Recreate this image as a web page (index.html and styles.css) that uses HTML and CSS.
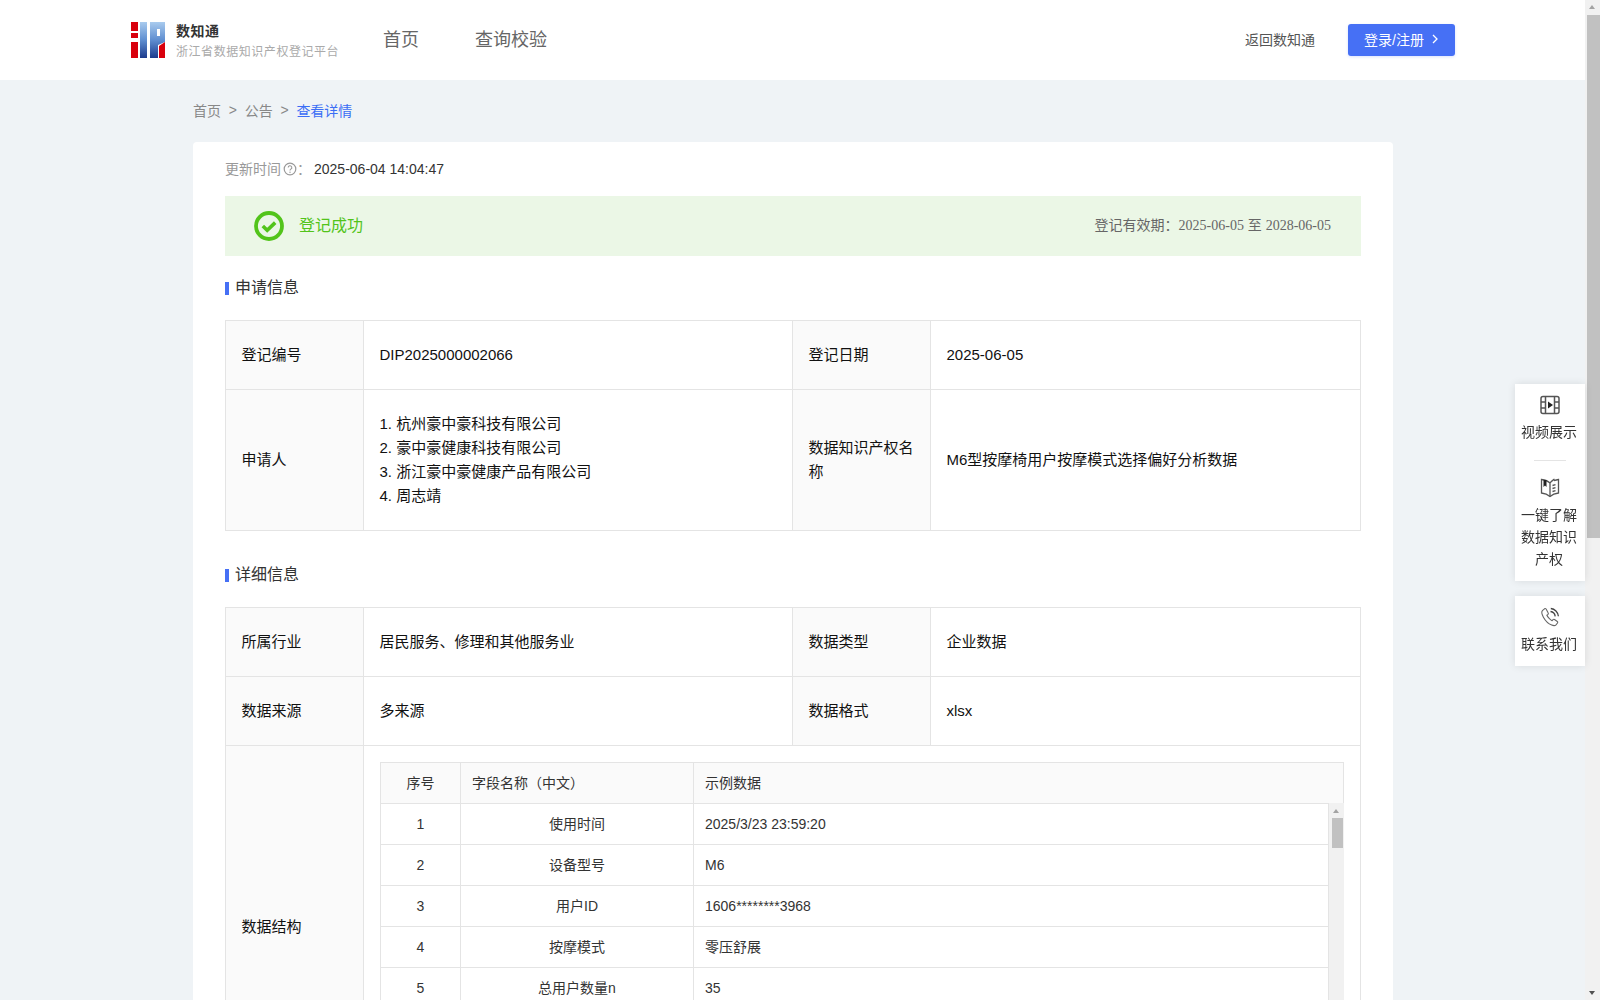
FILE: index.html
```html
<!DOCTYPE html>
<html lang="zh-CN">
<head>
    <meta charset="UTF-8">
    <title>数知通 - 查看详情</title>
    <link rel="stylesheet" href="styles.css">
</head>
<body>
    <div class="page">
        <div class="main">
            <header class="header">
                <div class="brand">
                    <svg class="logo" viewBox="0 0 34 36" width="34" height="36">
                        <defs>
                            <linearGradient id="logoBlue" x1="0" y1="0" x2="0" y2="1">
                                <stop offset="0" stop-color="#a9cbee"/>
                                <stop offset="0.5" stop-color="#5f8ed0"/>
                                <stop offset="1" stop-color="#1d3b8c"/>
                            </linearGradient>
                        </defs>
                        <path fill="#d9000d" d="M0 0h7v9H0zM0 11h7v5H0zM0 20h7v16H0z"/>
                        <path fill="url(#logoBlue)" d="M9 0h7v36H9zM19 0h15v20l-7 3v13h-8zM26 7v7h3V7z" fill-rule="evenodd"/>
                        <path fill="#d9000d" d="M28 24l6-4v16h-6z"/>
                    </svg>
                    <div class="brand-text">
                        <div class="brand-name">数知通</div>
                        <div class="brand-sub">浙江省数据知识产权登记平台</div>
                    </div>
                </div>
                <nav class="nav">
                    <a>首页</a>
                    <a>查询校验</a>
                </nav>
                <a class="back-link">返回数知通</a>
                <a class="login-btn">登录/注册
                    <svg viewBox="0 0 6 10" width="6" height="10"><path d="M1 1l4 4-4 4" fill="none" stroke="#fff" stroke-width="1.3"/></svg>
                </a>
            </header>

            <div class="breadcrumb">
                <span>首页</span><i>&gt;</i><span>公告</span><i>&gt;</i><span class="current">查看详情</span>
            </div>

            <div class="card">
                <div class="update-time">
                    <span class="update-label">更新时间</span>
                    <svg class="help-icon" viewBox="0 0 14 14" width="14" height="14">
                        <circle cx="7" cy="7" r="5.8" fill="none" stroke="#999" stroke-width="1.2"/>
                        <path d="M5.2 5.6a1.8 1.8 0 1 1 2.7 1.5c-.6.4-.9.7-.9 1.3" fill="none" stroke="#999" stroke-width="1.1"/>
                        <circle cx="7" cy="10.2" r=".7" fill="#999"/>
                    </svg>
                    <span class="update-label">：</span>
                    <span class="update-value">2025-06-04 14:04:47</span>
                </div>

                <div class="status-bar">
                    <svg viewBox="0 0 30 30" width="30" height="30">
                        <circle cx="15" cy="15" r="13" fill="none" stroke="#52c41a" stroke-width="3.8"/>
                        <path d="M8.800 15l4.400 4.200 8-7.600" fill="none" stroke="#52c41a" stroke-width="3.6"/>
                    </svg>
                    <span class="status-text">登记成功</span>
                    <span class="status-date">登记有效期：<em>2025-06-05</em> 至 <em>2028-06-05</em></span>
                </div>

                <h3 class="section-title">申请信息</h3>
                <table class="info-table">
                    <colgroup><col class="col-label"><col class="col-value"><col class="col-label"><col></colgroup>
                    <tr>
                        <th>登记编号</th>
                        <td>DIP2025000002066</td>
                        <th>登记日期</th>
                        <td>2025-06-05</td>
                    </tr>
                    <tr>
                        <th>申请人</th>
                        <td>
                            <div>1. 杭州豪中豪科技有限公司</div>
                            <div>2. 豪中豪健康科技有限公司</div>
                            <div>3. 浙江豪中豪健康产品有限公司</div>
                            <div>4. 周志靖</div>
                        </td>
                        <th>数据知识产权名称</th>
                        <td>M6型按摩椅用户按摩模式选择偏好分析数据</td>
                    </tr>
                </table>

                <h3 class="section-title section-second">详细信息</h3>
                <table class="info-table">
                    <colgroup><col class="col-label"><col class="col-value"><col class="col-label"><col></colgroup>
                    <tr>
                        <th>所属行业</th>
                        <td>居民服务、修理和其他服务业</td>
                        <th>数据类型</th>
                        <td>企业数据</td>
                    </tr>
                    <tr>
                        <th>数据来源</th>
                        <td>多来源</td>
                        <th>数据格式</th>
                        <td>xlsx</td>
                    </tr>
                    <tr>
                        <th>数据结构</th>
                        <td colspan="3" class="structure-cell">
                            <table class="field-table field-head">
                                <colgroup><col class="col-no"><col class="col-name"><col></colgroup>
                                <tr>
                                    <th class="center">序号</th>
                                    <th>字段名称（中文）</th>
                                    <th>示例数据</th>
                                </tr>
                            </table>
                            <div class="field-body">
                                <table class="field-table">
                                    <colgroup><col class="col-no"><col class="col-name"><col></colgroup>
                                    <tr><td class="center">1</td><td class="center">使用时间</td><td>2025/3/23 23:59:20</td></tr>
                                    <tr><td class="center">2</td><td class="center">设备型号</td><td>M6</td></tr>
                                    <tr><td class="center">3</td><td class="center">用户ID</td><td>1606********3968</td></tr>
                                    <tr><td class="center">4</td><td class="center">按摩模式</td><td>零压舒展</td></tr>
                                    <tr><td class="center">5</td><td class="center">总用户数量n</td><td>35</td></tr>
                                </table>
                                <div class="mini-scroll">
                                    <span class="arrow-up"></span>
                                    <span class="mini-thumb"></span>
                                </div>
                            </div>
                        </td>
                    </tr>
                </table>
            </div>
        </div>

        <div class="page-scroll">
            <span class="arrow-up"></span>
            <span class="page-thumb"></span>
            <span class="arrow-down"></span>
        </div>
    </div>

    <div class="side-tools">
        <div class="side-box">
            <div class="side-item">
                <svg viewBox="0 0 20 20" width="20" height="20" fill="none" stroke="#555" stroke-width="1.5">
                    <rect x="1" y="1.500" width="18" height="17" rx="2"/>
                    <path d="M5.500 1.500v17M14.500 1.500v17M1 7h4.500M1 13h4.500M14.500 7H19M14.500 13H19"/>
                    <path d="M8 6.500l5 3.500-5 3.500z" fill="#222" stroke="none"/>
                </svg>
                <span>视频展示</span>
            </div>
            <div class="side-line"></div>
            <div class="side-item">
                <svg viewBox="0 0 20 20" width="20" height="20" fill="none" stroke="#555" stroke-width="1.3">
                    <path d="M10 5C8 3 5 2 1.500 1.500v13.500c3.500.3 6.500 1.700 8.500 3.500 2-1.800 5-3.200 8.500-3.500V1.500c-1.500.2-3 .6-4.500 1.200"/>
                    <path d="M10 5v13.500M14.500 1C12.800 2.300 11 3.500 10 5"/>
                    <path d="M3.500 2h3v7l-1.500-1.400L3.500 9z" fill="#222" stroke="none"/>
                    <path d="M12.500 7.500l3-.8M12.500 10.500l3-.8M12.500 13.500l3-.8"/>
                </svg>
                <span>一键了解数据知识产权</span>
            </div>
        </div>
        <div class="side-box">
            <div class="side-item">
                <svg viewBox="0 0 20 20" width="20" height="20" fill="none" stroke="#666" stroke-width="1.1">
                    <path d="M4.500 1.800L2.400 3.600C1.500 4.500 1.700 7 3.400 10.200c2 3.600 5.200 6.600 8.300 7.900 2 .8 3.500.6 4.300-.3l1.500-1.800c.4-.5.300-1.100-.2-1.500l-2.800-2c-.5-.3-1-.3-1.400.1l-1 1.100c-1.500-.5-4.600-3.700-5.200-5.400l1.100-.9c.4-.4.500-.9.200-1.400L6.100 2c-.4-.5-1.100-.6-1.600-.2z"/>
                    <path d="M10.500 4.500c2.400.3 4.400 2.300 4.700 4.800M10.800 1.500c4 .3 7.200 3.600 7.600 7.700" stroke="#444" stroke-width="1.300"/>
                </svg>
                <span>联系我们</span>
            </div>
        </div>
    </div>
</body>
</html>
```
FILE: styles.css
```css
* {
    margin: 0;
    padding: 0;
    box-sizing: border-box;
}

body {
    font-family: "Liberation Sans", "Noto Sans CJK SC", sans-serif;
    font-size: 14px;
    color: #333;
    background: #eff3f6;
    overflow: hidden;
}

.page {
    display: flex;
    height: 1000px;
}

.main {
    flex: 1;
    min-width: 0;
    overflow: hidden;
}

/* header */
.header {
    display: flex;
    align-items: center;
    height: 80px;
    padding: 0 130px 0 131px;
    background: #fff;
}

.brand {
    display: flex;
    align-items: center;
    gap: 11px;
    width: 252px;
}

.logo {
    flex: none;
}

.brand-text {
    padding-top: 3px;
}

.brand-name {
    font-weight: bold;
    color: #333;
    letter-spacing: 0.5px;
    line-height: 20px;
}

.brand-sub {
    margin-top: 1px;
    font-size: 12px;
    color: #aaa;
    letter-spacing: 0.55px;
    line-height: 20px;
}

.nav {
    display: flex;
    gap: 56px;
    padding-bottom: 4px;
    font-size: 18px;
    color: #666;
}

.back-link {
    margin-left: auto;
    padding-bottom: 3px;
    color: #555;
}

.login-btn {
    display: flex;
    align-items: center;
    gap: 8px;
    height: 32px;
    margin-left: 33px;
    padding: 0 17px 3px 16px;
    border-radius: 3px;
    background: #4670f5;
    color: #fff;
    box-shadow: 0 1px 3px rgba(70, 112, 245, 0.2);
}

/* breadcrumb */
.breadcrumb {
    display: flex;
    align-items: center;
    height: 62px;
    padding: 0 0 3px 193px;
    color: #888;
}

.breadcrumb i {
    margin: 0 7.75px;
    font-style: normal;
}

.breadcrumb .current {
    color: #3b6ef5;
}

/* card */
.card {
    width: 1200px;
    margin-left: 193px;
    padding: 0 32px;
    border-radius: 4px;
    background: #fff;
}

.update-time {
    display: flex;
    align-items: center;
    height: 54px;
}

.update-label {
    padding-bottom: 3px;
    color: #999;
}

.help-icon {
    margin-left: 2px;
}

.update-value {
    margin-left: 3px;
}

.status-bar {
    display: flex;
    align-items: center;
    height: 60px;
    padding: 0 30px 0 29px;
    background: #ebf7e6;
}

.status-text {
    margin-left: 15px;
    padding-bottom: 4px;
    font-size: 16px;
    color: #52c41a;
}

.status-date {
    margin-left: auto;
    padding-bottom: 4px;
    color: #666;
}

.status-date em {
    font-family: "Liberation Serif", serif;
    font-style: normal;
}

.section-title {
    position: relative;
    margin-top: 21px;
    margin-bottom: 21px;
    padding-left: 10px;
    font-size: 16px;
    font-weight: normal;
    line-height: 22px;
}

.section-title::before {
    content: "";
    position: absolute;
    left: 0;
    top: 5px;
    width: 4px;
    height: 13px;
    background: #4670f5;
}

.section-second {
    margin-top: 33px;
}

/* info tables */
.info-table {
    width: 1136px;
    border-collapse: collapse;
    table-layout: fixed;
    font-size: 15px;
    line-height: 24px;
    color: #111;
}

.col-label {
    width: 138px;
}

.col-value {
    width: 429px;
}

.info-table > tbody > tr > th,
.info-table > tbody > tr > td {
    height: 69px;
    padding: 22px 15.5px;
    border: 1px solid #e4e4e4;
    text-align: left;
    font-weight: normal;
}

.info-table > tbody > tr > th {
    background: #fafafa;
}

.info-table > tbody > tr > .structure-cell {
    padding: 16px;
}

.field-table {
    width: 100%;
    border-collapse: collapse;
    table-layout: fixed;
    font-size: 14px;
    color: #333;
}

.col-no {
    width: 80px;
}

.col-name {
    width: 233px;
}

.field-table th,
.field-table td {
    height: 41px;
    padding: 0 11px;
    border: 1px solid #e4e4e4;
    text-align: left;
    font-weight: normal;
}

.field-head th {
    background: #fafafa;
}

.field-table .center {
    padding: 0 11px;
    text-align: center;
}

.field-body {
    display: flex;
    height: 289px;
    overflow: hidden;
    margin-top: -1px;
}

.field-body .field-table {
    flex: 1;
    min-width: 0;
    width: auto;
    align-self: flex-start;
}

.mini-scroll {
    position: relative;
    flex: none;
    width: 15px;
    background: #f1f1f1;
}

.mini-scroll .arrow-up {
    top: 6px;
    left: 4px;
}

.mini-thumb {
    position: absolute;
    top: 15px;
    left: 3px;
    width: 11px;
    height: 30px;
    background: #c1c1c1;
}

/* page scrollbar */
.page-scroll {
    position: relative;
    flex: none;
    width: 15px;
    background: #f1f1f1;
}

.page-scroll .arrow-up {
    top: 5px;
    left: 4px;
}

.page-thumb {
    position: absolute;
    top: 15px;
    left: 2px;
    width: 13px;
    height: 523px;
    background: #c1c1c1;
}

.arrow-up,
.arrow-down {
    position: absolute;
    width: 0;
    height: 0;
    border-left: 3.5px solid transparent;
    border-right: 3.5px solid transparent;
}

.arrow-up {
    border-bottom: 4px solid #a3a3a3;
}

.arrow-down {
    left: 4px;
    bottom: 5px;
    border-top: 4px solid #505050;
}

/* floating tools on the right */
.side-tools {
    position: fixed;
    top: 384px;
    right: 15px;
    display: flex;
    flex-direction: column;
    gap: 15px;
    width: 70px;
}

.side-box {
    padding: 11px 8px 11px 6px;
    background: #fff;
    box-shadow: 0 0 8px rgba(0, 0, 0, 0.1);
    text-align: center;
    line-height: 22px;
    color: #333;
}

.side-item svg {
    display: block;
    margin: 0 0 6px 19px;
}

.side-line {
    width: 32px;
    height: 1px;
    margin: 17px 0 17px 13px;
    background: #e4e4e4;
}
```
